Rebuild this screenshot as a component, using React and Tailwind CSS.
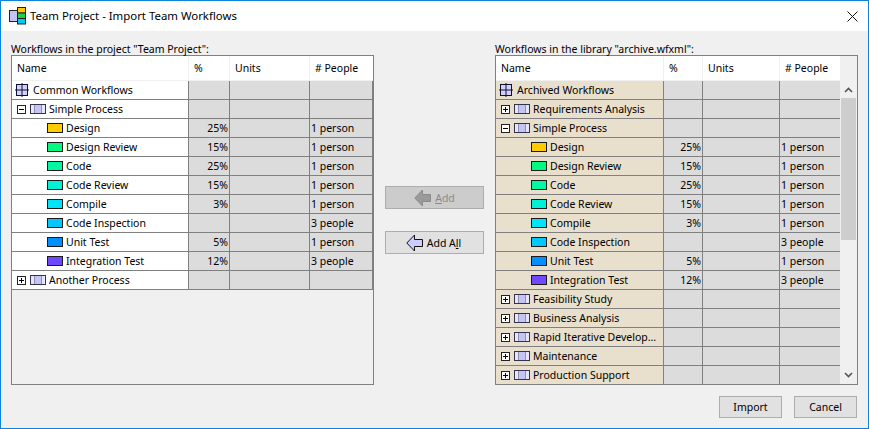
import React from 'react';

const leftRows = [
  { type: 'root', name: 'Common Workflows' },
  { type: 'minus', name: 'Simple Process' },
  { name: 'Design', color: '#ffcc00', pct: '25%', people: '1 person' },
  { name: 'Design Review', color: '#00fa80', pct: '15%', people: '1 person' },
  { name: 'Code', color: '#00f8a4', pct: '25%', people: '1 person' },
  { name: 'Code Review', color: '#00f0d8', pct: '15%', people: '1 person' },
  { name: 'Compile', color: '#00e4fa', pct: '3%', people: '1 person' },
  { name: 'Code Inspection', color: '#00c8ff', pct: '', people: '3 people' },
  { name: 'Unit Test', color: '#0090ff', pct: '5%', people: '1 person' },
  { name: 'Integration Test', color: '#7048ff', pct: '12%', people: '3 people' },
  { type: 'plus', name: 'Another Process' },
];

const rightRows = [
  { type: 'root', name: 'Archived Workflows' },
  { type: 'plus', name: 'Requirements Analysis' },
  ...leftRows.slice(1, 10),
  { type: 'plus', name: 'Feasibility Study' },
  { type: 'plus', name: 'Business Analysis' },
  { type: 'plus', name: 'Rapid Iterative Develop...' },
  { type: 'plus', name: 'Maintenance' },
  { type: 'plus', name: 'Production Support' },
];

function GridIcon() {
  return (
    <svg width="14" height="14" viewBox="0 0 14 14" className="shrink-0">
      <rect x="1.5" y="1.5" width="11" height="11" fill="#d0d0fa" stroke="#101030" />
      <path d="M7 0V14M0 7H14" stroke="#101030" />
    </svg>
  );
}

function ProcessIcon() {
  return (
    <svg width="16" height="10" viewBox="0 0 16 10" className="shrink-0">
      <rect x="0.5" y="0.5" width="15" height="9" fill="#c4c4f6" stroke="#33334d" />
      <rect x="1" y="1" width="3" height="8" fill="#e6e6fb" />
      <rect x="12" y="1" width="3" height="8" fill="#e6e6fb" />
      <path d="M4.5 1V9M11.5 1V9" stroke="#9090b0" />
    </svg>
  );
}

function ExpandBox({ open }) {
  return (
    <svg width="9" height="9" viewBox="0 0 9 9" className="shrink-0">
      <rect x="0.5" y="0.5" width="8" height="8" fill="#fff" stroke="#222" />
      <path d={open ? 'M2 4.5H7' : 'M2 4.5H7M4.5 2V7'} stroke="#000" />
    </svg>
  );
}

function Swatch({ color }) {
  return (
    <svg width="16" height="10" viewBox="0 0 16 10" className="shrink-0">
      <rect x="0.5" y="0.5" width="15" height="9" fill={color} stroke="#1a1a1a" />
    </svg>
  );
}

function ArrowIcon({ fill, stroke }) {
  return (
    <svg width="17" height="18" viewBox="0 0 17 18" className="shrink-0">
      <path d="M0.8 9L8.5 1V5.5H16.5V12.5H8.5V17Z" fill={fill} stroke={stroke} />
    </svg>
  );
}

function NameCell({ row, bg }) {
  return (
    <div className={`flex h-[19px] items-center border-r border-b border-[#808080] whitespace-nowrap ${bg}`}>
      {row.type === 'root' && (
        <>
          <span className="ml-[3px] flex"><GridIcon /></span>
          <span className="ml-[4px]">{row.name}</span>
        </>
      )}
      {(row.type === 'plus' || row.type === 'minus') && (
        <>
          <span className="ml-[5px] flex"><ExpandBox open={row.type === 'minus'} /></span>
          <span className="ml-[4px] flex"><ProcessIcon /></span>
          <span className="ml-[3px]">{row.name}</span>
        </>
      )}
      {row.color && (
        <>
          <span className="ml-[35px] flex"><Swatch color={row.color} /></span>
          <span className="ml-[3px]">{row.name}</span>
        </>
      )}
    </div>
  );
}

function Header({ label, last }) {
  return (
    <div className={`flex h-[25px] items-center bg-white pl-[5px] border-b border-[#f0f0f0] ${last ? '' : 'border-r'}`}>
      {label}
    </div>
  );
}

function Rows({ rows, nameBg, lastLine }) {
  return rows.map((row) => (
    <React.Fragment key={row.name}>
      <NameCell row={row} bg={nameBg} />
      <div className="flex h-[19px] items-center justify-end border-r border-b border-[#808080] bg-[#dcdcdc] pr-px">{row.pct}</div>
      <div className="h-[19px] border-r border-b border-[#808080] bg-[#dcdcdc]" />
      <div className={`flex h-[19px] items-center border-b border-[#808080] bg-[#dcdcdc] pl-px ${lastLine ? 'border-r' : ''}`}>{row.people}</div>
    </React.Fragment>
  ));
}

function Button({ children, className }) {
  return (
    <button className={`flex items-center justify-center border border-[#adadad] ${className}`}>
      {children}
    </button>
  );
}

export default function App() {
  return (
    <div className="flex h-[429px] w-[869px] flex-col border border-[#0a84dc] bg-[#f0f0f0] text-[10.5px] leading-[14px] text-black font-['Noto_Sans',sans-serif]">
      {/* title bar */}
      <div className="flex h-[30px] shrink-0 items-center bg-white pl-[8px] pr-[10px]">
        <svg width="17" height="18" viewBox="0 0 17 18" className="shrink-0">
          <rect x="0.5" y="3.5" width="9" height="11" fill="#c4c4f6" stroke="#222" />
          <rect x="8.5" y="0.5" width="8" height="5.5" fill="#ffcc00" stroke="#222" />
          <rect x="8.5" y="6" width="8" height="5.5" fill="#20d040" stroke="#222" />
          <rect x="8.5" y="11.5" width="8" height="5.5" fill="#00ccee" stroke="#222" />
        </svg>
        <span className="ml-[4px] text-[11.4px]">Team Project - Import Team Workflows</span>
        <svg width="11" height="11" viewBox="0 0 11 11" className="ml-auto">
          <path d="M0.5 0.5L10.5 10.5M10.5 0.5L0.5 10.5" stroke="#111" />
        </svg>
      </div>

      {/* lists */}
      <div className="flex pl-[10px] pr-[10px] pt-[11px]">
        <div className="w-[363px]">
          <div className="h-[13px] whitespace-nowrap">Workflows in the project "Team Project":</div>
          <div className="h-[330px] overflow-hidden border border-[#808080]">
            <div className="grid grid-cols-[177px_41px_80px_63px]">
              <Header label="Name" />
              <Header label="%" />
              <Header label="Units" />
              <Header label="# People" last />
              <Rows rows={leftRows} nameBg="bg-white" lastLine />
            </div>
          </div>
        </div>

        <div className="flex flex-1 flex-col items-center justify-center gap-[22px] pt-[13px]">
          <Button className="h-[23px] w-[99px] gap-[4px] bg-[#cccccc] text-[#8a8a8a]">
            <ArrowIcon fill="#9a9a9a" stroke="#8a8a8a" />
            <span><u>A</u>dd</span>
          </Button>
          <Button className="h-[23px] w-[99px] gap-[4px] bg-[#e1e1e1] pr-[2px]">
            <ArrowIcon fill="#ccccff" stroke="#111" />
            <span>Add A<u>l</u>l</span>
          </Button>
        </div>

        <div className="w-[363px]">
          <div className="h-[13px] whitespace-nowrap">Workflows in the library "archive.wfxml":</div>
          <div className="flex h-[330px] overflow-hidden border border-[#808080]">
            <div className="grid h-fit grid-cols-[168px_39px_77px_60px]">
              <Header label="Name" />
              <Header label="%" />
              <Header label="Units" />
              <Header label="# People" last />
              <Rows rows={rightRows} nameBg="bg-[#e8dfcc]" />
            </div>
            {/* scrollbar */}
            <div className="flex w-[17px] flex-col items-center">
              <div className="flex h-[42px] w-full shrink-0 items-end justify-center pb-[5px]">
                <svg width="9" height="6" viewBox="0 0 9 6"><path d="M1 5L4.5 1.5L8 5" fill="none" stroke="#555" strokeWidth="1.6" /></svg>
              </div>
              <div className="h-[142px] w-[15px] shrink-0 bg-[#cdcdcd]" />
              <div className="flex w-full flex-1 items-end justify-center pb-[6px]">
                <svg width="9" height="6" viewBox="0 0 9 6"><path d="M1 1L4.5 4.5L8 1" fill="none" stroke="#555" strokeWidth="1.6" /></svg>
              </div>
            </div>
          </div>
        </div>
      </div>

      {/* footer */}
      <div className="flex justify-end gap-[12px] pr-[11px] pt-[11px]">
        <Button className="h-[22px] w-[63px] bg-[#e1e1e1]">Import</Button>
        <Button className="h-[22px] w-[63px] bg-[#e1e1e1]">Cancel</Button>
      </div>
    </div>
  );
}
